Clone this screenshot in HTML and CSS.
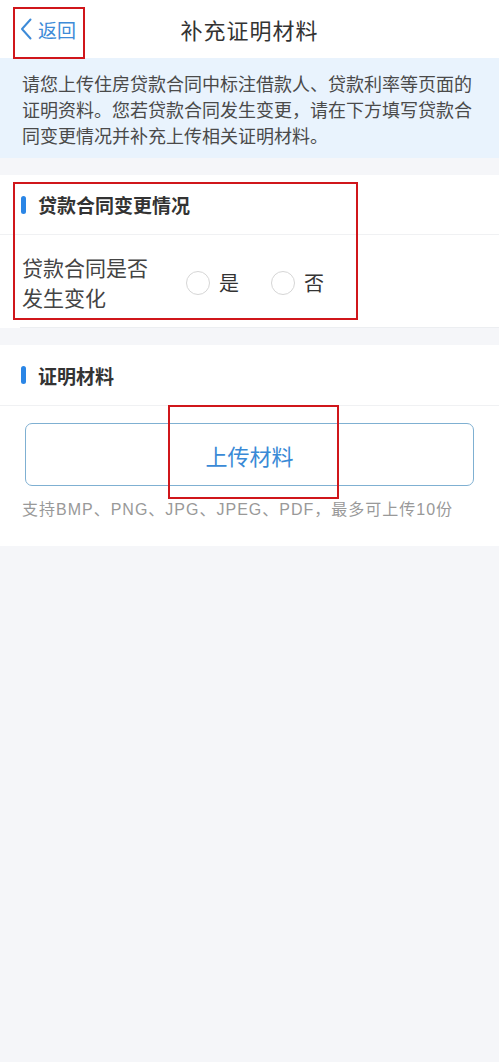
FILE: index.html
```html
<!DOCTYPE html>
<html lang="zh-CN">
<head>
<meta charset="utf-8">
<title>补充证明材料</title>
<link rel="stylesheet" href="styles.css">
</head>
<body>
<div class="page">
  <header class="nav">
    <a class="back">
      <svg class="chev" viewBox="0 0 12 22" width="12" height="22"><path d="M10.5 1.5 L2 11 L10.5 20.5" fill="none" stroke="#3d8bd8" stroke-width="2" stroke-linecap="round" stroke-linejoin="round"/></svg>
      <span>返回</span>
    </a>
    <h1 class="title">补充证明材料</h1>
    <span></span>
  </header>

  <div class="notice">请您上传住房贷款合同中标注借款人、贷款利率等页面的证明资料。您若贷款合同发生变更，请在下方填写贷款合同变更情况并补充上传相关证明材料。</div>

  <section class="card card-change">
    <div class="sec-head"><i class="bar"></i><span>贷款合同变更情况</span></div>
    <div class="q-row">
      <div class="q-label">贷款合同是否<br>发生变化</div>
      <div class="radios">
        <label class="radio"><span class="circle"></span><span>是</span></label>
        <label class="radio"><span class="circle"></span><span>否</span></label>
      </div>
    </div>
  </section>

  <section class="card card-proof">
    <div class="sec-head"><i class="bar"></i><span>证明材料</span></div>
    <div class="upload-wrap">
      <div class="upload-btn">上传材料</div>
      <p class="hint">支持BMP、PNG、JPG、JPEG、PDF，最多可上传10份</p>
    </div>
  </section>

  <div class="mark mark-back"></div>
  <div class="mark mark-change"></div>
  <div class="mark mark-upload"></div>
</div>
</body>
</html>
```

FILE: styles.css
```css
* { box-sizing: border-box; }
html, body {
  margin: 0;
  padding: 0;
  background: #f5f6f9;
  font-family: "Noto Sans CJK SC", "Noto Sans", sans-serif;
  color: #333;
}
.page {
  position: relative;
  min-height: 1062px;
}
.nav {
  height: 58px;
  background: #fff;
  display: grid;
  grid-template-columns: 90px 1fr 90px;
  align-items: center;
}
.back {
  display: flex;
  align-items: center;
  gap: 6px;
  padding-left: 20px;
  color: #3d8bd8;
  font-size: 19px;
  line-height: 1;
}
.chev { display: block; }
.title {
  margin: 0;
  text-align: center;
  font-size: 22px;
  font-weight: 400;
  color: #333;
  letter-spacing: 1px;
}
.notice {
  background: #e9f3fd;
  padding: 12px 22px 9px 22px;
  font-size: 18px;
  line-height: 26px;
  color: #4a4a4a;
  height: 100px;
}
.card {
  background: #fff;
  margin-top: 17px;
}
.sec-head {
  height: 60px;
  display: flex;
  align-items: center;
  padding-left: 21px;
  font-size: 19px;
  font-weight: 700;
  color: #333;
  border-bottom: 1px solid #f0f1f3;
}
.bar {
  display: block;
  width: 5px;
  height: 18px;
  border-radius: 3px;
  background: #2b86e6;
  margin-right: 12px;
}
.q-row {
  height: 93px;
  display: flex;
  align-items: center;
  padding-left: 22px;
  position: relative;
}
.q-row::after {
  content: "";
  position: absolute;
  left: 20px;
  right: 0;
  bottom: 0;
  border-bottom: 1px solid #eceef1;
}
.q-label {
  font-size: 21px;
  line-height: 30px;
  color: #444;
  width: 164px;
}
.radios {
  display: flex;
  gap: 32px;
  margin-top: 2px;
}
.radio {
  display: flex;
  align-items: center;
  gap: 9px;
  font-size: 20px;
  color: #333;
}
.circle {
  display: block;
  width: 24px;
  height: 24px;
  border-radius: 50%;
  border: 1.5px solid #d6d6d6;
}
.card-proof .sec-head { height: 61px; }
.upload-wrap {
  padding: 17px 25px 0 25px;
  height: 140px;
}
.upload-btn {
  height: 63px;
  border: 1.5px solid #7fb0d2;
  border-radius: 7px;
  display: flex;
  align-items: center;
  justify-content: center;
  font-size: 22px;
  color: #3a8ad6;
}
.hint {
  margin: 13px 0 0 -3px;
  font-family: "Liberation Sans", "Noto Sans CJK SC", sans-serif;
  font-size: 16px;
  line-height: 22px;
  letter-spacing: 1px;
  color: #999;
}
.mark {
  position: absolute;
  border: 2px solid #d0161b;
  pointer-events: none;
}
.mark-back { left: 13px; top: 7px; width: 72px; height: 52px; }
.mark-change { left: 13px; top: 182px; width: 345px; height: 138px; }
.mark-upload { left: 168px; top: 405px; width: 171px; height: 94px; }
```
